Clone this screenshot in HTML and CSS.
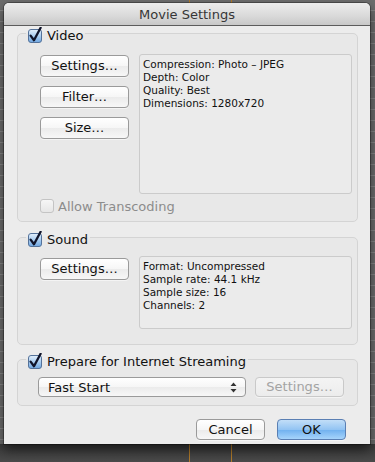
FILE: index.html
```html
<!DOCTYPE html>
<html>
<head>
<meta charset="utf-8">
<link rel="stylesheet" href="styles.css">
</head>
<body>
<div class="desktop">
  <div class="window">
    <div class="titlebar">Movie Settings</div>
    <div class="content">
      <fieldset class="group video">
        <legend><span class="lg"><svg class="cb" width="16" height="16" viewBox="0 0 16 16"><defs><linearGradient id="cbg" x1="0" y1="0" x2="0" y2="1"><stop offset="0" stop-color="#e4f0fb"/><stop offset="0.5" stop-color="#a9cdf1"/><stop offset="1" stop-color="#6fa6e0"/></linearGradient></defs><rect x="0.5" y="2.5" width="13" height="13" rx="2.5" fill="url(#cbg)" stroke="#54729a"/><path d="M2.6 8.6 L6 13.2 L12.6 0.8" fill="none" stroke="#10142a" stroke-width="2.3" stroke-linecap="round" stroke-linejoin="round"/></svg>Video</span></legend>
        <div class="row video-row">
          <div class="btncol">
            <div class="btn">Settings…</div>
            <div class="btn">Filter…</div>
            <div class="btn">Size…</div>
          </div>
          <div class="info info-video">
            <div>Compression: Photo – JPEG</div>
            <div>Depth: Color</div>
            <div>Quality: Best</div>
            <div>Dimensions: 1280x720</div>
          </div>
        </div>
        <div class="allow"><span class="cb-off"></span>Allow Transcoding</div>
      </fieldset>

      <fieldset class="group sound">
        <legend><span class="lg"><svg class="cb" width="16" height="16" viewBox="0 0 16 16"><rect x="0.5" y="2.5" width="13" height="13" rx="2.5" fill="url(#cbg)" stroke="#54729a"/><path d="M2.6 8.6 L6 13.2 L12.6 0.8" fill="none" stroke="#10142a" stroke-width="2.3" stroke-linecap="round" stroke-linejoin="round"/></svg>Sound</span></legend>
        <div class="row sound-row">
          <div class="btncol">
            <div class="btn">Settings…</div>
          </div>
          <div class="info info-sound">
            <div>Format: Uncompressed</div>
            <div>Sample rate: 44.1 kHz</div>
            <div>Sample size: 16</div>
            <div>Channels: 2</div>
          </div>
        </div>
      </fieldset>

      <fieldset class="group stream">
        <legend><span class="lg"><svg class="cb" width="16" height="16" viewBox="0 0 16 16"><rect x="0.5" y="2.5" width="13" height="13" rx="2.5" fill="url(#cbg)" stroke="#54729a"/><path d="M2.6 8.6 L6 13.2 L12.6 0.8" fill="none" stroke="#10142a" stroke-width="2.3" stroke-linecap="round" stroke-linejoin="round"/></svg>Prepare for Internet Streaming</span></legend>
        <div class="row stream-row">
          <div class="popup"><span>Fast Start</span><svg width="7" height="11" viewBox="0 0 7 11"><path d="M3.5 0.5 L6.5 4 L0.5 4 Z M0.5 7 L6.5 7 L3.5 10.5 Z" fill="#333"/></svg></div>
          <div class="btn disabled">Settings…</div>
        </div>
      </fieldset>
    </div>
    <div class="footer">
      <div class="btn fbtn">Cancel</div>
      <div class="btn fbtn ok">OK</div>
    </div>
  </div>
</div>
</body>
</html>
```

FILE: styles.css
```css
html, body {
  margin: 0;
  padding: 0;
}
body {
  width: 375px;
  height: 462px;
  overflow: hidden;
  font-family: "DejaVu Sans", "Liberation Sans", sans-serif;
}
.desktop {
  height: 462px;
  box-sizing: border-box;
  padding-top: 3px;
  background:
    linear-gradient(to right, transparent 189px, #b07a2a 189px, #b07a2a 190px, transparent 190px, transparent 231px, #b07a2a 231px, #b07a2a 232px, transparent 232px),
    linear-gradient(to bottom, transparent 444px, #3a3a3a 444px, #4a4a4a 462px),
    repeating-linear-gradient(to bottom, #6c6c6c 0, #6c6c6c 10px, #858585 10px, #858585 11px);
}
.window {
  margin-left: 4px;
  width: 366px;
  height: 441px;
  background: #ececec;
  border-radius: 5px 5px 0 0;
  display: flex;
  flex-direction: column;
  box-shadow: 0 0 0 1px rgba(0, 0, 0, 0.3), 0 6px 12px rgba(0, 0, 0, 0.55);
}
.titlebar {
  height: 22px;
  border-bottom: 1px solid #5c5c5c;
  border-radius: 5px 5px 0 0;
  background: linear-gradient(#ececec, #d9d9d9 60%, #c8c8c8);
  text-align: center;
  font-size: 13px;
  line-height: 23px;
  color: #363636;
}
.content {
  padding: 0 12px 0 13px;
  margin-top: -3px;
}
.group {
  margin: 0;
  padding: 0;
  min-width: 0;
  border: 1px solid #d4d4d4;
  border-radius: 5px;
  background: #e8e8e8;
}
.group legend {
  margin-left: 8px;
  padding: 4px 2px 0 2px;
  font-size: 13px;
  color: #111;
}
.lg {
  display: flex;
  align-items: center;
  height: 16px;
}
.cb {
  display: block;
  margin-right: 3px;
}
.row {
  display: flex;
  align-items: flex-start;
}
.btncol {
  display: flex;
  flex-direction: column;
  gap: 9px;
  margin-left: 22px;
  width: 89px;
  margin-top: 1px;
}
.btn {
  box-sizing: border-box;
  height: 22px;
  border: 1px solid #9a9a9a;
  border-radius: 4px;
  background: linear-gradient(#ffffff, #f6f6f6 50%, #ebebeb 51%, #f7f7f7);
  box-shadow: 0 1px 0 rgba(255, 255, 255, 0.5);
  font-size: 13px;
  line-height: 20px;
  text-align: center;
  color: #111;
}
.info {
  box-sizing: border-box;
  margin-left: 10px;
  width: 213px;
  border: 1px solid #cbcbcb;
  border-radius: 3px;
  background: #ebebeb;
  padding: 3px 3px;
  font-size: 10.5px;
  line-height: 13px;
  color: #111;
}
.video-row {
  padding-top: 11px;
}
.info-video {
  height: 140px;
}
.allow {
  display: flex;
  align-items: center;
  margin: 5px 0 8px 22px;
  height: 14px;
  font-size: 13px;
  color: #8c8c8c;
}
.cb-off {
  box-sizing: border-box;
  width: 14px;
  height: 14px;
  margin-right: 4px;
  border: 1px solid #c4c4c4;
  border-radius: 3px;
  background: linear-gradient(#f6f6f6, #e6e6e6);
}
.sound {
  margin-top: 5px;
}
.sound-row {
  padding: 9px 0 15px 0;
}
.sound-row .btncol {
  margin-top: 2px;
}
.info-sound {
  height: 73px;
}
.stream {
  margin-top: 4px;
}
.stream-row {
  padding: 8px 0 8px 20px;
  gap: 9px;
}
.popup {
  box-sizing: border-box;
  width: 208px;
  height: 20px;
  border: 1px solid #9a9a9a;
  border-radius: 4px;
  background: linear-gradient(#ffffff, #f6f6f6 50%, #ebebeb 51%, #f7f7f7);
  display: flex;
  align-items: center;
  justify-content: space-between;
  padding: 0 8px 0 9px;
  font-size: 13px;
  color: #111;
}
.btn.disabled {
  width: 89px;
  height: 20px;
  line-height: 18px;
  border-color: #c9c9c9;
  background: linear-gradient(#f4f4f4, #ececec);
  color: #a3a3a3;
}
.footer {
  display: flex;
  justify-content: flex-end;
  gap: 12px;
  padding: 13px 24px 0 0;
}
.fbtn {
  width: 69px;
  height: 21px;
  line-height: 19px;
}
.ok {
  border-color: #5a7fb3;
  background: linear-gradient(#c2def8, #93c4f3 50%, #6fb0ef 51%, #a6d4fb);
}
```
